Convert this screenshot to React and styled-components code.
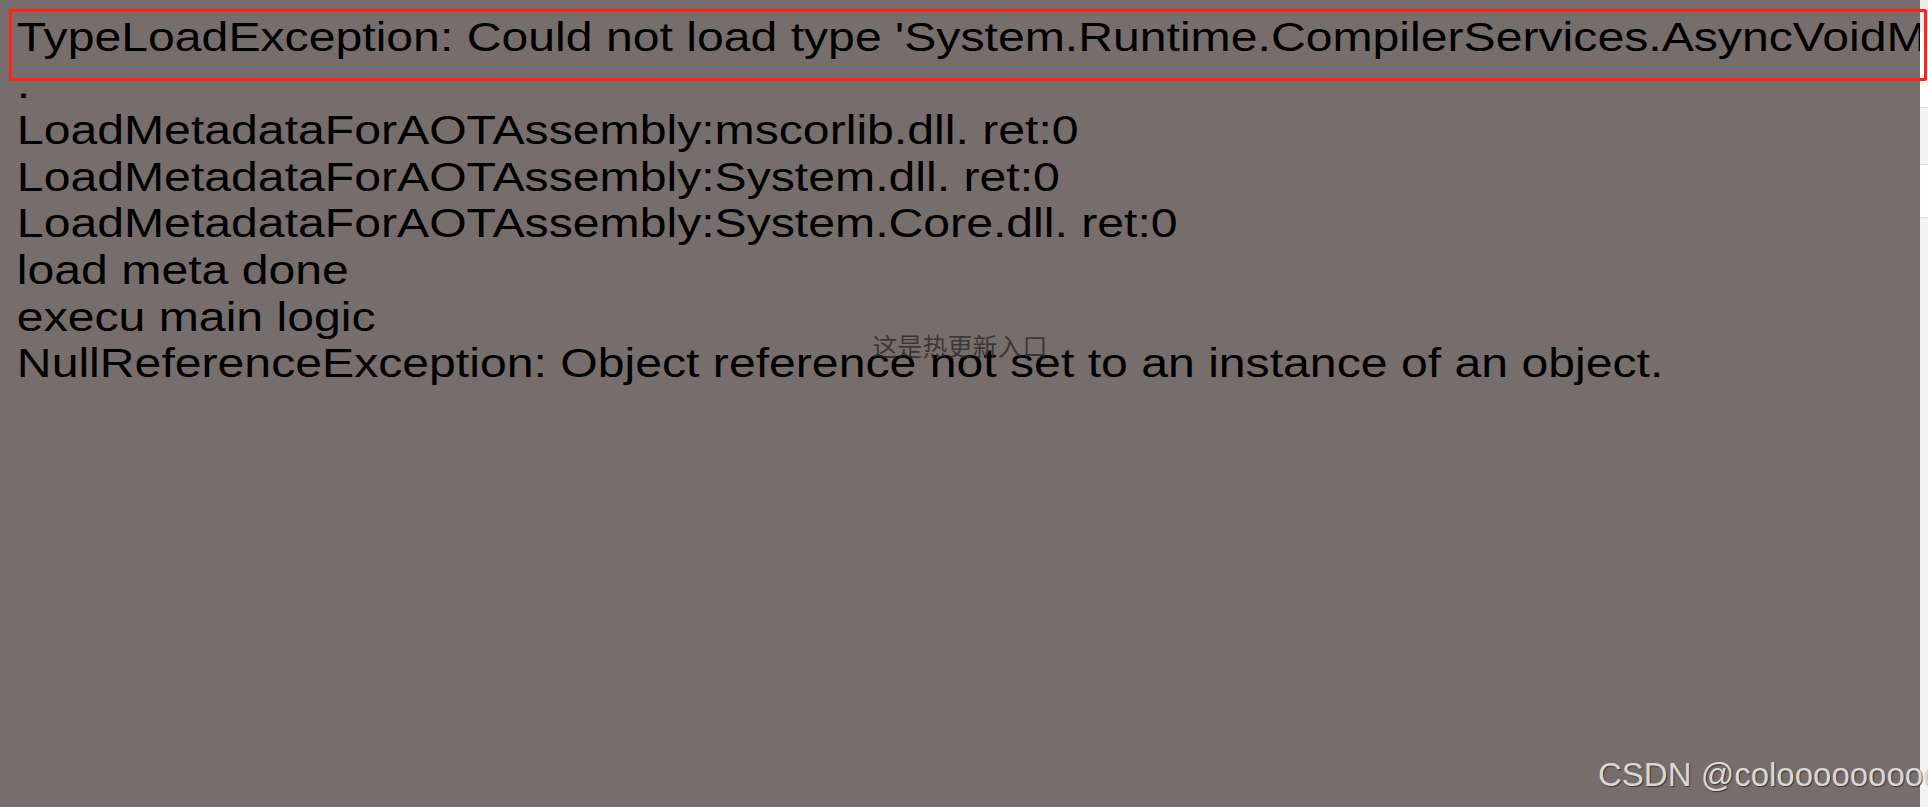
import React from "react";
import styled, { createGlobalStyle } from "styled-components";

const GlobalStyle = createGlobalStyle`
  html, body {
    margin: 0;
    padding: 0;
    background: #f3f3f4;
    overflow: hidden;
  }
`;

const Page = styled.div`
  position: relative;
  display: flex;
  width: 1928px;
  height: 807px;
  overflow: hidden;
`;

const GamePanel = styled.div`
  position: relative;
  width: 1920px;
  height: 807px;
  flex-shrink: 0;
  background: #766e6c;
  overflow: hidden;
`;

// the log font in the game view is drawn wider than Arial, so stretch it
const Log = styled.div`
  padding: 14px 0 0 14px;
  font-family: "Liberation Sans", Arial, sans-serif;
  font-size: 40px;
  line-height: 46.6px;
  color: #000;
  transform: scaleX(1.204);
  transform-origin: 0 0;
`;

const LogLine = styled.div`
  white-space: nowrap;
`;

const HotfixLabel = styled.div`
  position: absolute;
  top: 331px;
  left: 0;
  width: 100%;
  text-align: center;
  font-family: "Noto Sans CJK SC", "Noto Sans", sans-serif;
  font-size: 25px;
  line-height: 28px;
  color: rgba(40, 36, 36, 0.75);
`;

const Watermark = styled.div`
  position: absolute;
  left: 1598px;
  top: 757px;
  font-family: "Liberation Sans", Arial, sans-serif;
  font-size: 33px;
  line-height: 36px;
  white-space: nowrap;
  color: #dad8d7;
  text-shadow: 1px 1px 1px rgba(40, 34, 32, 0.75);
`;

const SideStrip = styled.div`
  flex: 1;
  display: flex;
  flex-direction: column;
  background: #f3f3f4;
`;

const Stripe = styled.div`
  height: ${(p) => p.$h}px;
  background: ${(p) => p.$bg};
  border-bottom: ${(p) => (p.$line ? "1px solid #dcdcde" : "none")};
  flex-shrink: 0;
`;

const Highlight = styled.div`
  position: absolute;
  left: 9px;
  top: 9px;
  width: 1912px;
  height: 66px;
  border: 3px solid #ff2419;
  border-radius: 2px;
  pointer-events: none;
`;

const lines = [
  "TypeLoadException: Could not load type 'System.Runtime.CompilerServices.AsyncVoidMethodBuilder' from assembly 'mscorlib'",
  ".",
  "LoadMetadataForAOTAssembly:mscorlib.dll. ret:0",
  "LoadMetadataForAOTAssembly:System.dll. ret:0",
  "LoadMetadataForAOTAssembly:System.Core.dll. ret:0",
  "load meta done",
  "execu main logic",
  "NullReferenceException: Object reference not set to an instance of an object.",
];

export default function App() {
  return (
    <>
      <GlobalStyle />
      <Page>
        <GamePanel>
          <Log>
            {lines.map((l, i) => (
              <LogLine key={i}>{l}</LogLine>
            ))}
          </Log>
          <HotfixLabel>这是热更新入口</HotfixLabel>
        </GamePanel>
        <SideStrip>
          <Stripe $h={32} $bg="#ececef" />
          <Stripe $h={75} $bg="#ffffff" $line />
          <Stripe $h={56} $bg="#f3f3f3" $line />
          <Stripe $h={52} $bg="#ffffff" $line />
        </SideStrip>
        <Watermark>CSDN @coloooooooooo</Watermark>
        <Highlight />
      </Page>
    </>
  );
}
